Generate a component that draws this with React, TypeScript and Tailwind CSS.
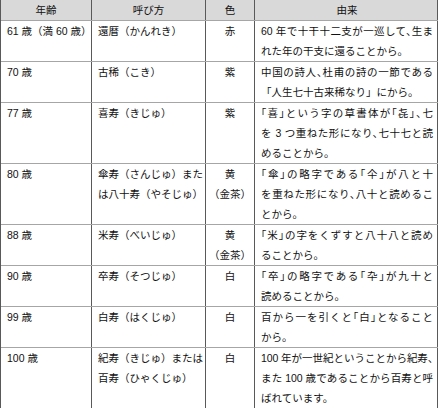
type Row = {
  age: string[];
  name: string[];
  color: string[];
  origin: string[];
};

const rows: Row[] = [
  {
    age: ["61 歳（満 60 歳）"],
    name: ["還暦（かんれき）"],
    color: ["赤"],
    origin: ["60 年で十干十二支が一巡して、生ま", "れた年の干支に還ることから。"],
  },
  {
    age: ["70 歳"],
    name: ["古稀（こき）"],
    color: ["紫"],
    origin: ["中国の詩人、杜甫の詩の一節である", "「人生七十古来稀なり」にから。"],
  },
  {
    age: ["77 歳"],
    name: ["喜寿（きじゅ）"],
    color: ["紫"],
    origin: [
      "「喜」という字の草書体が「㐂」、七",
      "を 3 つ重ねた形になり、七十七と読",
      "めることから。",
    ],
  },
  {
    age: ["80 歳"],
    name: ["傘寿（さんじゅ）また", "は八十寿（やそじゅ）"],
    color: ["黄", "（金茶）"],
    origin: [
      "「傘」の略字である「仐」が八と十",
      "を重ねた形になり、八十と読めるこ",
      "とから。",
    ],
  },
  {
    age: ["88 歳"],
    name: ["米寿（べいじゅ）"],
    color: ["黄", "（金茶）"],
    origin: ["「米」の字をくずすと八十八と読め", "ることから。"],
  },
  {
    age: ["90 歳"],
    name: ["卒寿（そつじゅ）"],
    color: ["白"],
    origin: ["「卒」の略字である「卆」が九十と", "読めることから。"],
  },
  {
    age: ["99 歳"],
    name: ["白寿（はくじゅ）"],
    color: ["白"],
    origin: ["百から一を引くと「白」となること", "から。"],
  },
  {
    age: ["100 歳"],
    name: ["紀寿（きじゅ）または", "百寿（ひゃくじゅ）"],
    color: ["白"],
    origin: [
      "100 年が一世紀ということから紀寿、",
      "また 100 歳であることから百寿と呼",
      "ばれています。",
    ],
  },
];

const cols = [
  "w-[91px] px-[6px]",
  "w-[114px] px-[6px]",
  "w-[49px] text-center",
  "w-[183px] pl-[6px] pr-[4px]",
];

function Lines({ lines, justify }: { lines: string[]; justify?: boolean }) {
  return (
    <>
      {lines.map((l, i) => (
        <div
          key={i}
          className={
            justify && i < lines.length - 1
              ? "whitespace-nowrap tracking-[-0.1px] [text-align-last:justify] [font-feature-settings:'halt']"
              : "whitespace-nowrap"
          }
        >
          {l}
        </div>
      ))}
    </>
  );
}

export default function App() {
  return (
    <div
      className="w-[439px] h-[408px] overflow-hidden bg-white text-[10.5px] leading-[20px] text-[#111]"
      style={{ fontFamily: '"Liberation Sans", "Noto Sans CJK JP", sans-serif' }}
    >
      <div className="w-[438px] border-l border-[#595959]">
        <div className="flex h-[21px] border-b border-[#a6a6a6] bg-[#d9d9d9]">
          {["年齢", "呼び方", "色", "由来"].map((h, i) => (
            <div
              key={h}
              className={`${cols[i]} border-r border-[#595959] text-center`}
            >
              {h}
            </div>
          ))}
        </div>
        {rows.map((r, idx) => (
          <div
            key={r.age[0]}
            className={`flex border-[#a6a6a6] ${
              idx === rows.length - 1 ? "border-b-2" : "border-b"
            }`}
          >
            <div className={`${cols[0]} border-r border-[#595959]`}>
              <Lines lines={r.age} />
            </div>
            <div className={`${cols[1]} border-r border-[#595959]`}>
              <Lines lines={r.name} />
            </div>
            <div className={`${cols[2]} border-r border-[#595959]`}>
              <Lines lines={r.color} />
            </div>
            <div className={`${cols[3]} border-r border-[#595959] min-h-[40px]`}>
              <Lines lines={r.origin} justify />
            </div>
          </div>
        ))}
      </div>
    </div>
  );
}
